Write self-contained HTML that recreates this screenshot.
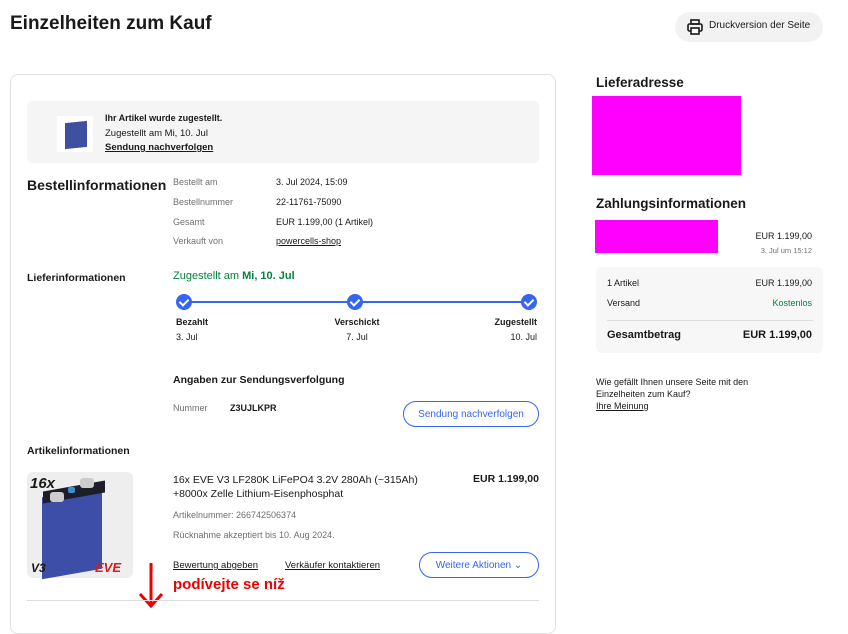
<!DOCTYPE html>
<html><head><meta charset="utf-8"><style>
*{margin:0;padding:0;box-sizing:border-box}
body{width:848px;height:608px;overflow:hidden;background:#fff;font-family:"Liberation Sans",Arial,sans-serif;color:#191919;position:relative}
.a{position:absolute;white-space:nowrap}
.s{font-size:10px}
.g{color:#707070}
.b{font-weight:bold}
u{text-decoration:underline}
.chk{position:absolute;width:16px;height:16px;border-radius:50%;background:#3665f3}
.chk:after{content:"";position:absolute;left:5px;top:3px;width:4px;height:7px;border:solid #fff;border-width:0 2px 2px 0;transform:rotate(45deg)}
.btn{position:absolute;border:1px solid #3665f3;border-radius:14px;color:#3665f3;font-size:10px;text-align:center;display:flex;align-items:center;justify-content:center}
</style></head><body>
<div class="a b" style="left:10px;top:13px;font-size:19px">Einzelheiten zum Kauf</div>
<div class="a" style="left:675px;top:12px;width:148px;height:30px;border-radius:15px;background:#f2f2f2"></div>
<svg class="a" style="left:686px;top:18px" width="18" height="18" viewBox="0 0 18 18" fill="none" stroke="#191919" stroke-width="1.6"><rect x="5" y="2" width="8" height="4"/><rect x="2" y="6" width="14" height="7" rx="1.5"/><rect x="5" y="10" width="8" height="6" fill="#fff"/></svg>
<div class="a s" style="left:709px;top:20px">Druckversion der Seite</div>

<div class="a" style="left:10px;top:74px;width:546px;height:560px;border:1px solid #e0e0e0;border-radius:8px"></div>
<div class="a" style="left:27px;top:101px;width:512px;height:62px;background:#f5f5f5;border-radius:5px"></div>
<div class="a" style="left:57px;top:116px;width:36px;height:36px;background:#fff"></div>
<div class="a" style="left:65px;top:122px;width:22px;height:26px;background:#3e50a0;transform:skewY(-6deg)"></div>
<div class="a s" style="left:105px;top:113px;font-size:9px;font-weight:bold">Ihr Artikel wurde zugestellt.</div>
<div class="a s" style="left:105px;top:128px;font-size:9.5px">Zugestellt am Mi, 10. Jul</div>
<div class="a s b" style="left:105px;top:142px;font-size:9.5px"><u>Sendung nachverfolgen</u></div>

<div class="a" style="left:27px;top:177px;font-size:14px;font-weight:bold">Bestellinformationen</div>
<div class="a s g" style="left:173px;top:177px;font-size:9px">Bestellt am</div>
<div class="a s" style="left:276px;top:177px;font-size:9px">3. Jul 2024, 15:09</div>
<div class="a s g" style="left:173px;top:197px;font-size:9px">Bestellnummer</div>
<div class="a s" style="left:276px;top:197px;font-size:9px">22-11761-75090</div>
<div class="a s g" style="left:173px;top:217px;font-size:9px">Gesamt</div>
<div class="a s" style="left:276px;top:217px;font-size:9px">EUR 1.199,00 (1 Artikel)</div>
<div class="a s g" style="left:173px;top:236px;font-size:9px">Verkauft von</div>
<div class="a s" style="left:276px;top:236px;font-size:9px"><u>powercells-shop</u></div>

<div class="a b" style="left:27px;top:272px;font-size:10.5px">Lieferinformationen</div>
<div class="a" style="left:173px;top:270px;font-size:11px;color:#05823f">Zugestellt am <b>Mi, 10. Jul</b></div>
<div class="a" style="left:184px;top:301px;width:345px;height:2px;background:#3665f3"></div>
<div class="chk" style="left:176px;top:294px"></div>
<div class="chk" style="left:347px;top:294px"></div>
<div class="chk" style="left:521px;top:294px"></div>
<div class="a b" style="left:176px;top:317px;font-size:9px">Bezahlt</div>
<div class="a" style="left:176px;top:332px;font-size:9px">3. Jul</div>
<div class="a b" style="left:322px;top:317px;font-size:9px;width:70px;text-align:center">Verschickt</div>
<div class="a" style="left:322px;top:332px;font-size:9px;width:70px;text-align:center">7. Jul</div>
<div class="a b" style="left:469px;top:317px;font-size:9px;width:68px;text-align:right">Zugestellt</div>
<div class="a" style="left:469px;top:332px;font-size:9px;width:68px;text-align:right">10. Jul</div>

<div class="a b" style="left:173px;top:374px;font-size:10.5px">Angaben zur Sendungsverfolgung</div>
<div class="a g" style="left:173px;top:403px;font-size:9px">Nummer</div>
<div class="a b" style="left:230px;top:403px;font-size:9px">Z3UJLKPR</div>
<div class="btn" style="left:403px;top:401px;width:136px;height:26px">Sendung nachverfolgen</div>

<div class="a b" style="left:27px;top:445px;font-size:10.5px">Artikelinformationen</div>
<div class="a" style="left:27px;top:472px;width:106px;height:106px;background:#eee;border-radius:6px"></div>
<div class="a" style="left:42px;top:492px;width:60px;height:82px;background:#3d4ea8;transform:skewY(-10deg)"></div>
<div class="a" style="left:43px;top:486px;width:62px;height:12px;background:#1e1e2a;transform:skewY(-10deg)"></div>
<div class="a" style="left:50px;top:492px;width:14px;height:10px;background:#ccc;border-radius:3px"></div>
<div class="a" style="left:80px;top:478px;width:14px;height:10px;background:#ccc;border-radius:3px"></div>
<div class="a" style="left:68px;top:487px;width:7px;height:6px;background:#3a8fd0;border-radius:2px"></div>
<div class="a b" style="left:30px;top:475px;font-size:15px;font-style:italic">16x</div>
<div class="a b" style="left:31px;top:561px;font-size:12px;font-style:italic">V3</div>
<div class="a b" style="left:95px;top:560px;font-size:13px;font-style:italic;color:#d21e1e">EVE</div>
<div class="a" style="left:173px;top:473px;font-size:10.5px;line-height:14px">16x EVE V3 LF280K LiFePO4 3.2V 280Ah (~315Ah)<br>+8000x Zelle Lithium-Eisenphosphat</div>
<div class="a b" style="left:470px;top:473px;font-size:10.5px;width:69px;text-align:right">EUR 1.199,00</div>
<div class="a g" style="left:173px;top:510px;font-size:9px">Artikelnummer: 266742506374</div>
<div class="a g" style="left:173px;top:530px;font-size:9px">Rücknahme akzeptiert bis 10. Aug 2024.</div>
<div class="a" style="left:173px;top:560px;font-size:9.5px"><u>Bewertung abgeben</u></div>
<div class="a" style="left:285px;top:560px;font-size:9.5px"><u>Verkäufer kontaktieren</u></div>
<div class="btn" style="left:419px;top:552px;width:120px;height:26px">Weitere Aktionen&nbsp;⌄</div>
<div class="a b" style="left:173px;top:576px;font-size:15px;color:#e00">podívejte se níž</div>
<svg class="a" style="left:136px;top:561px" width="30" height="47" viewBox="0 0 30 47"><path d="M15 2V45M4 33L15 45L26 33" stroke="#e00" stroke-width="3" fill="none"/></svg>
<div class="a" style="left:27px;top:600px;width:512px;height:1px;background:#ddd"></div>

<div class="a b" style="left:596px;top:75px;font-size:13.5px">Lieferadresse</div>
<div class="a" style="left:592px;top:96px;width:149px;height:79px;background:#f0f"></div>
<div class="a b" style="left:596px;top:196px;font-size:13.5px">Zahlungsinformationen</div>
<div class="a" style="left:595px;top:220px;width:123px;height:33px;background:#f0f"></div>
<div class="a" style="left:740px;top:231px;font-size:9px;width:72px;text-align:right">EUR 1.199,00</div>
<div class="a g" style="left:740px;top:246px;font-size:7.5px;width:72px;text-align:right">3. Jul um 15:12</div>
<div class="a" style="left:596px;top:267px;width:227px;height:86px;background:#f7f7f7;border-radius:6px"></div>
<div class="a" style="left:607px;top:278px;font-size:9px">1 Artikel</div>
<div class="a" style="left:740px;top:278px;font-size:9px;width:72px;text-align:right">EUR 1.199,00</div>
<div class="a" style="left:607px;top:298px;font-size:9px">Versand</div>
<div class="a" style="left:740px;top:298px;font-size:9px;width:72px;text-align:right;color:#05823f">Kostenlos</div>
<div class="a" style="left:607px;top:320px;width:206px;height:1px;background:#ddd"></div>
<div class="a b" style="left:607px;top:329px;font-size:11px">Gesamtbetrag</div>
<div class="a b" style="left:730px;top:329px;font-size:11px;width:82px;text-align:right">EUR 1.199,00</div>
<div class="a" style="left:596px;top:376px;font-size:9px;line-height:12px">Wie gefällt Ihnen unsere Seite mit den<br>Einzelheiten zum Kauf?<br><u>Ihre Meinung</u></div>
</body></html>
